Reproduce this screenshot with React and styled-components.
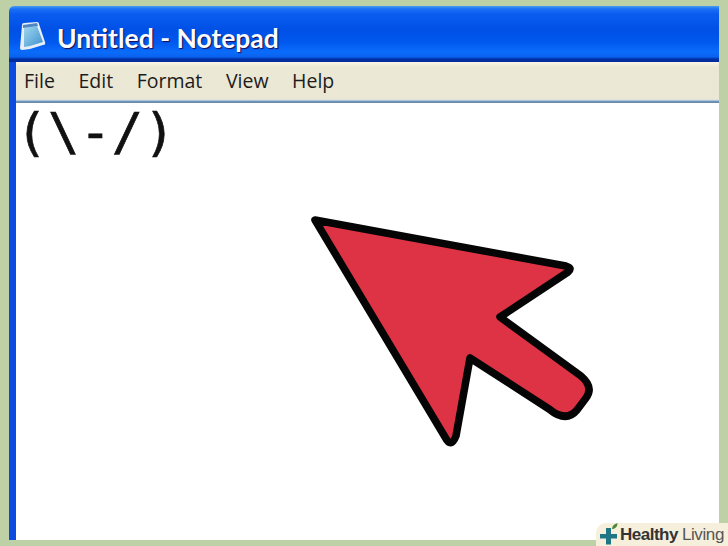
import React from "react";
import styled, { createGlobalStyle } from "styled-components";

const Global = createGlobalStyle`
  html, body { margin: 0; padding: 0; }
  body { width: 728px; height: 546px; overflow: hidden; background: #bdd0a6; }
`;

const Page = styled.div`
  position: relative;
  box-sizing: border-box;
  width: 728px;
  height: 546px;
  padding: 6px 9px 6px 9px;
  background: #bdd0a6;
`;

const Win = styled.div`
  display: flex;
  flex-direction: column;
  height: 100%;
  border-top-left-radius: 5px;
  overflow: hidden;
  background: #fff;
`;

const TitleBar = styled.div`
  display: flex;
  align-items: center;
  gap: 9px;
  height: 56px;
  box-sizing: border-box;
  padding: 8px 0 0 10px;
  flex: none;
  background: linear-gradient(180deg, #4a9cf0 0, #1a70f6 3px, #0a5cf0 8px, #0050e6 24px, #0058ee 36px, #0a6cfb 46px, #0a62ee 51px, #0030a4 53px, #002a9c 56px);
`;

const TitleText = styled.span`
  font-family: "Lato", "Liberation Sans", Arial, sans-serif;
  font-weight: 700;
  font-size: 26.500px;
  color: #fbfbff;
  text-shadow: 1px 1px 1px #200a50;
  white-space: nowrap;
`;

const Body = styled.div`
  flex: 1;
  display: flex;
  flex-direction: column;
  border-left: 7px solid #0c4ae0;
  min-height: 0;
`;

const MenuBar = styled.div`
  display: flex;
  align-items: center;
  gap: 23.600px;
  height: 38px;
  box-sizing: border-box;
  padding: 0 0 0 8px;
  flex: none;
  background: linear-gradient(180deg, #f9f6e8 0, #ece8d6 5px, #ebe7d5 100%);
  border-bottom: 1px solid #dfe3e0;
`;

const MenuItem = styled.span`
  font-family: "Open Sans", "Liberation Sans", sans-serif;
  font-size: 19.500px;
  color: #1c1c1c;
`;

const Rule = styled.div`
  flex: none;
  height: 3px;
  background: linear-gradient(180deg, #cfdceb 0, #5f84a8 60%, #6f90b0 100%);
`;

const Editor = styled.div`
  flex: 1;
  background: #fff;
  font-family: "DejaVu Sans Mono", "Liberation Mono", monospace;
  font-size: 52px;
  line-height: 58px;
  letter-spacing: 0.6px;
  color: #111;
  -webkit-text-stroke: 0.7px #111;
  min-height: 0;
`;

const Pointer = styled.svg`
  position: absolute;
  left: 0;
  top: 0;
  width: 728px;
  height: 546px;
  pointer-events: none;
`;

const Badge = styled.div`
  position: absolute;
  right: 0;
  bottom: 0;
  display: flex;
  align-items: center;
  width: 132px;
  height: 23px;
  box-sizing: border-box;
  padding-left: 3px;
  background: #f6efdc;
  border-top-left-radius: 10px;
`;

const BrandBold = styled.span`
  font-family: "Liberation Sans", Arial, sans-serif;
  font-weight: 700;
  font-size: 17px;
  letter-spacing: -0.5px;
  color: #333;
  margin-left: 2px;
`;

const BrandLight = styled.span`
  font-family: "Liberation Sans", Arial, sans-serif;
  font-size: 17px;
  letter-spacing: -0.4px;
  color: #555;
  margin-left: 4px;
`;

const NotepadIcon = () => (
  <svg width="29" height="32" viewBox="0 0 29 32">
    <defs>
      <linearGradient id="pad" x1="0" y1="0" x2="1" y2="1">
        <stop offset="0" stopColor="#a0d8ee" />
        <stop offset="1" stopColor="#3f8fd0" />
      </linearGradient>
    </defs>
    <path d="M3 3 Q3 1 5 1 L18 0 Q20 0 20 2 L26 20 Q27 23 24 23 L11 27 L3 28 Q1 28 1 26 Z" fill="#e8eef6" />
    <path d="M5 6 L18 4 L24 20 L11 24 L5 25 Z" fill="url(#pad)" />
    <path d="M4 3 L18 1 L19 4 L4 6 Z" fill="#4f86c4" />
  </svg>
);

const BrandMark = () => (
  <svg width="19" height="23" viewBox="0 0 19 23">
    <path d="M7 5 h5 v6 h6 v4.500 h-6 v6 h-5 v-6 h-6 v-4.500 h6 Z" fill="#1f7684" />
    <path d="M13 6 C13 3 15 1 18.500 0 C18.500 3.500 16.500 6 13 6 Z" fill="#4e8a3a" />
  </svg>
);

export default function App() {
  return (
    <>
      <Global />
      <Page>
        <Win>
          <TitleBar>
            <NotepadIcon />
            <TitleText>Untitled - Notepad</TitleText>
          </TitleBar>
          <Body>
            <MenuBar>
              <MenuItem>File</MenuItem>
              <MenuItem>Edit</MenuItem>
              <MenuItem>Format</MenuItem>
              <MenuItem>View</MenuItem>
              <MenuItem>Help</MenuItem>
            </MenuBar>
            <Rule />
            <Editor>{"(\\-/)"}</Editor>
          </Body>
        </Win>
        <Pointer viewBox="0 0 728 546">
          <path
            d="M315 220 L566 266 Q573 268 568 272 L500 317 L581 376 Q594 387 586 398 L577 410 Q566 423 549 409 L470 358 L456 436 Q451 449 445 437 Z"
            fill="#de3344"
            stroke="#050505"
            strokeWidth="7.500"
            strokeLinejoin="round"
          />
        </Pointer>
        <Badge>
          <BrandMark />
          <BrandBold>Healthy</BrandBold>
          <BrandLight>Living</BrandLight>
        </Badge>
      </Page>
    </>
  );
}
